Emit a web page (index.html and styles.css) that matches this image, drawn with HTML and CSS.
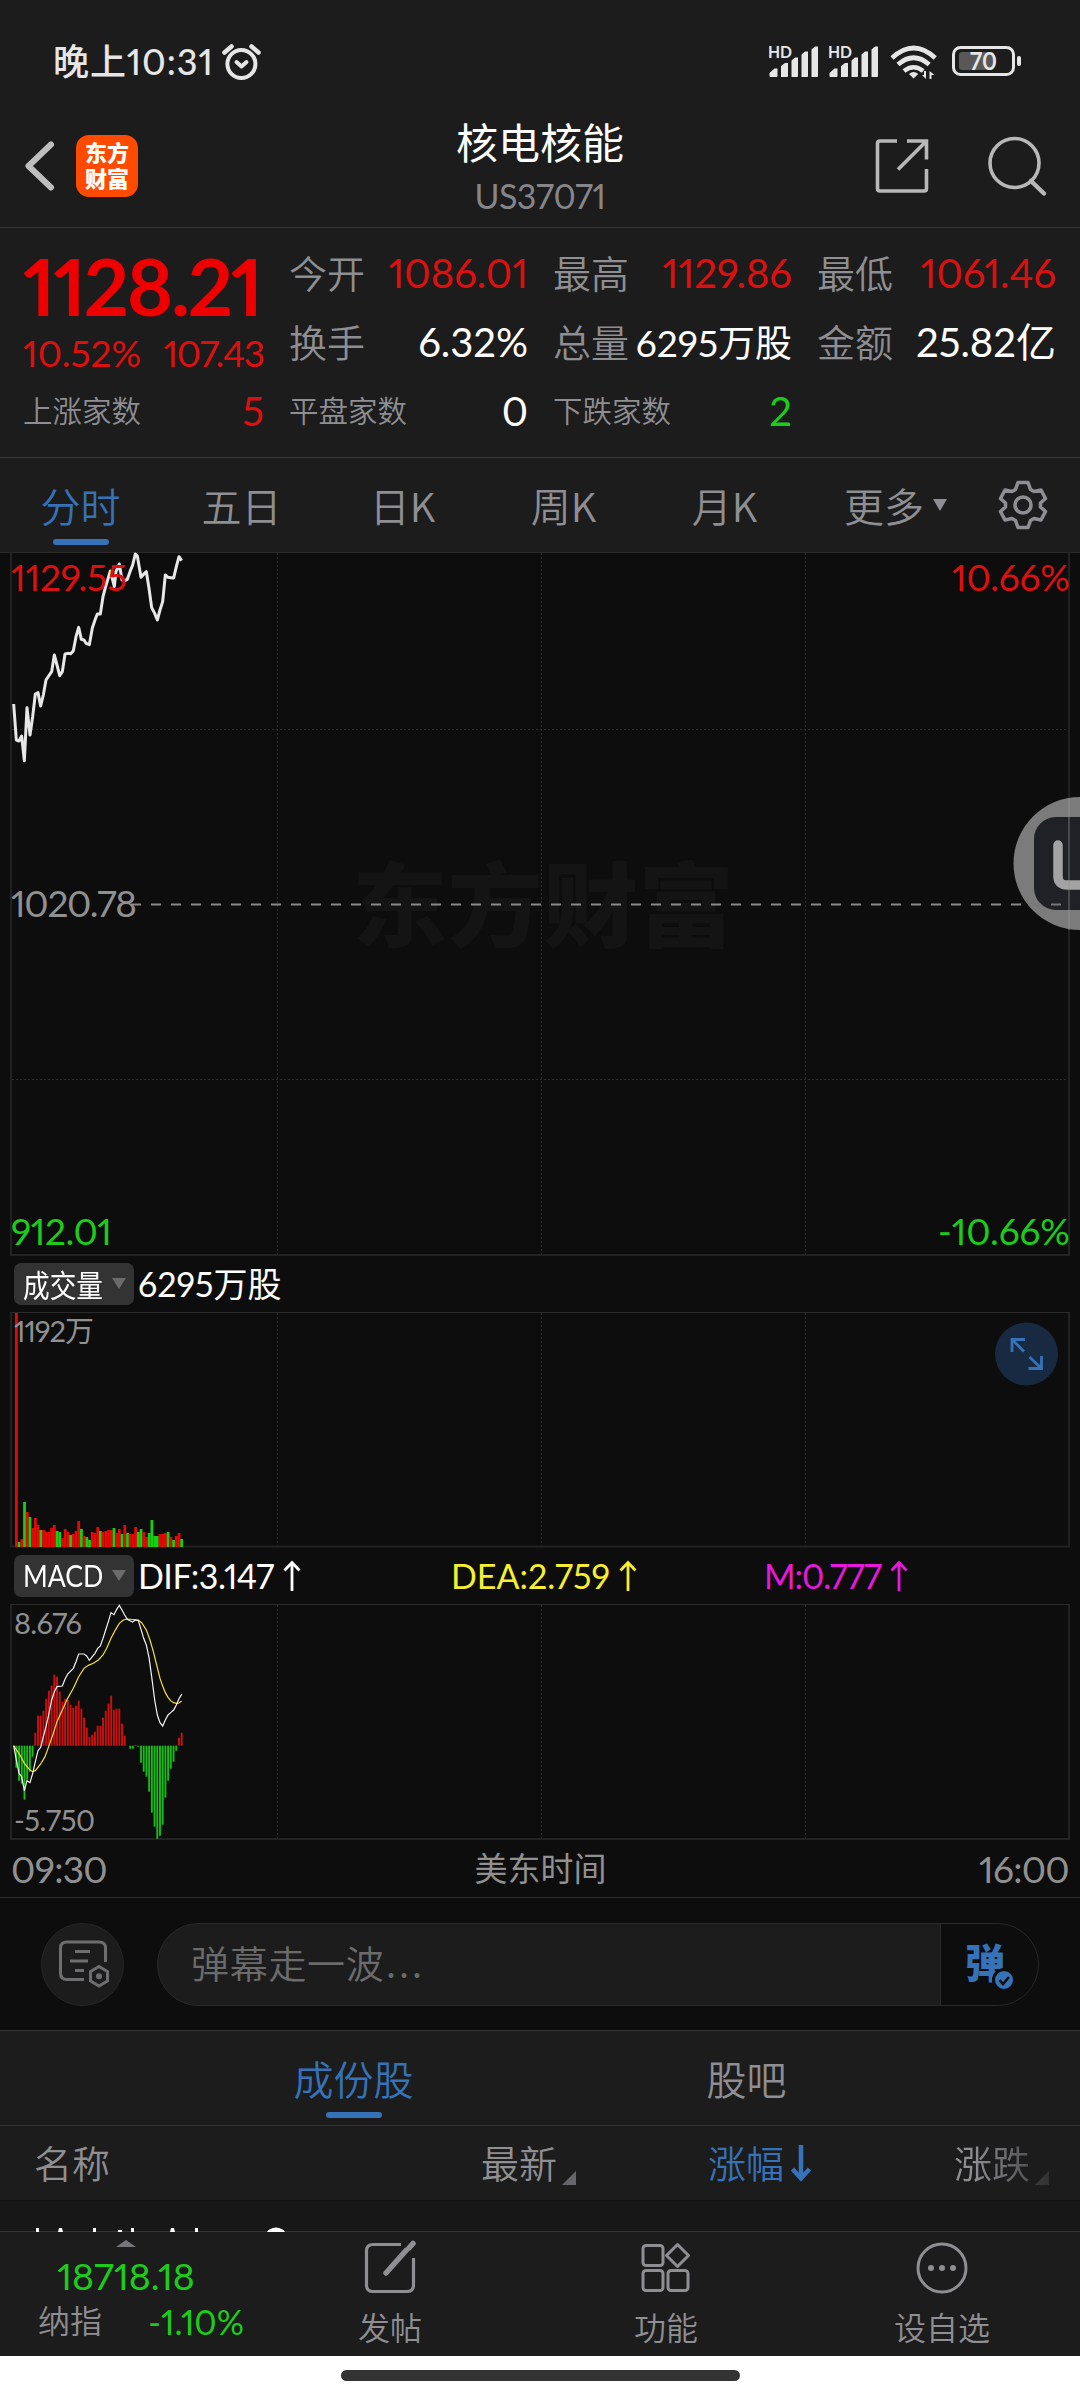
FILE: index.html
```html
<!DOCTYPE html>
<html lang="zh-CN">
<head>
  <meta charset="UTF-8">
  <meta name="viewport" content="width=device-width, initial-scale=1.0">
  <title>核电核能 US37071</title>
  <link rel="stylesheet" href="styles.css">
</head>
<body>
  <div class="status-bar">
    <span class="clock">晚上10:31</span>
    <svg class="alarm" width="42" height="42" viewBox="220 42 42 42" fill="none" stroke="#e6e6e6" stroke-linecap="round">
      <circle cx="241.4" cy="64" r="14" stroke-width="4"/>
      <path d="M224.500 52.500l7-6M258.500 52.500l-7-6" stroke-width="4.500"/>
      <path d="M236.500 62l5 4.500 5-4.500" stroke-width="4" stroke-linejoin="round"/>
    </svg>
    <svg class="signals" width="260" height="42" viewBox="766 42 260 42" fill="#e6e6e6">
      <g id="signal">
        <text x="768" y="57.500" font-size="17" font-weight="700" textLength="24" lengthAdjust="spacingAndGlyphs">HD</text>
        <path d="M770.500 77q-1 0-1-1v-3l5-4.500h3v7.500q0 1-1 1zM781 77v-11l4-3h3v13q0 1-1 1zM791.500 77v-16.500l3.500-3h3v18.500q0 1-1 1zM801.500 77v-22.500l3.500-3h3v24.500q0 1-1 1zM811.500 77v-27.500l3.500-3h3v29.500q0 1-1 1z"/>
      </g>
      <use href="#signal" x="60"/>
      <g fill="none" stroke="#e6e6e6" stroke-width="4.600">
        <path d="M892 58q21.600-20 43.200 0"/>
        <path d="M898 64.500q15.600-13.500 31.200 0"/>
        <path d="M904 71q9.600-7.500 19.200 0"/>
      </g>
      <path d="M909 74q4.600-4 9.200 0l-4.600 4.500zM926 71v8l-4-4h2v-4zM929.500 79v-8l5 4h-3v4z"/>
      <rect x="953.500" y="47.500" width="60" height="27" rx="7" fill="none" stroke="#e6e6e6" stroke-width="3"/>
      <rect x="959" y="52" width="35" height="18" rx="3" fill="#585858"/>
      <rect x="1017" y="56" width="4" height="10" rx="2"/>
      <text x="970" y="70" font-size="24" font-weight="700" textLength="27" lengthAdjust="spacingAndGlyphs">70</text>
    </svg>
  </div>

  <div class="nav-bar">
    <svg class="back" width="34" height="56" viewBox="24 138 34 56" fill="none" stroke="#bebebe" stroke-width="6" stroke-linecap="round" stroke-linejoin="round"><path d="M51 144.500L28.500 166l22.500 21.500"/></svg>
    <div class="logo"><span>东方</span><span>财富</span></div>
    <div class="nav-title">
      <h1>核电核能</h1>
      <p>US37071</p>
    </div>
    <svg class="nav-icons" width="180" height="64" viewBox="870 134 180 64" fill="none" stroke="#b8b8b8" stroke-width="3.600">
      <path d="M897 141h-17q-2.500 0-2.500 2.500v45q0 2.500 2.500 2.500h44q2.500 0 2.500-2.500v-19.500M926.500 159.500v-18.500h-19.500M925 142.500l-27 27"/>
      <circle cx="1014.500" cy="163" r="24.500"/>
      <path d="M1031 181l13 12.500" stroke-linecap="round" stroke-width="4.500"/>
    </svg>
  </div>

  <div class="quote">
    <div class="price">
      <div class="last">1128.21</div>
      <div class="change"><span>10.52%</span><span class="diff">107.43</span></div>
    </div>
    <div class="item"><label>今开</label><b class="red">1086.01</b></div>
    <div class="item"><label>最高</label><b class="red">1129.86</b></div>
    <div class="item"><label>最低</label><b class="red">1061.46</b></div>
    <div class="item"><label>换手</label><b>6.32%</b></div>
    <div class="item"><label>总量</label><b class="amount">6295万股</b></div>
    <div class="item"><label>金额</label><b>25.82亿</b></div>
    <div class="item small"><label>上涨家数</label><b class="red">5</b></div>
    <div class="item small"><label>平盘家数</label><b>0</b></div>
    <div class="item small"><label>下跌家数</label><b class="green">2</b></div>
  </div>

  <div class="period-tabs">
    <span class="tab active">分时</span>
    <span class="tab">五日</span>
    <span class="tab">日K</span>
    <span class="tab">周K</span>
    <span class="tab">月K</span>
    <span class="tab more">更多<i></i></span>
    <svg class="gear" width="50" height="52" viewBox="-25 -26 50 52" fill="none" stroke="#8e8e93" stroke-width="3.600" stroke-linejoin="round">
      <path d="M-5-22.500H5L7.500-15.500 11-13.500 18-15 22.500-6.500 17.500-2V2L22.500 6.500 18 15 11 13.500 7.500 15.500 5 22.500H-5L-7.500 15.500-11 13.500-18 15-22.500 6.500-17.500 2V-2L-22.500-6.500-18-15-11-13.500-7.500-15.500z"/>
      <circle r="8"/>
    </svg>
  </div>

  <svg class="chart" width="1080" height="704" viewBox="0 552 1080 704">
    <text class="watermark" x="352" y="940" textLength="382" lengthAdjust="spacingAndGlyphs">东方财富</text>
    <path class="grid" d="M277.500 553v701M541.500 553v701M805.500 553v701M12 729.500h1057M12 1079.500h1057"/>
    <path class="frame" d="M11 553v702h1058v-702"/>
    <path class="top-line" d="M0 552.500h1080"/>
    <path class="base-line" d="M131 904.500h932"/>
    <polyline class="price-line" transform="translate(0 540) scale(.33333)" points="41,492 49,600 57,603 65,588 73,662 81,503 90,585 98,530 106,462 114,458 122,498 130,465 138,420 146,408 155,395 163,345 171,375 179,407 187,395 195,342 203,340 212,341 220,332 228,290 236,262 244,298 252,300 258,310 268,314 277,264 285,240 292,222 301,222 309,170 317,140 331,93 343,140 348,95 358,72 366,120 374,122 382,118 390,95 398,75 406,42 412,48 423,112 431,103 439,95 447,145 455,203 464,220 472,240 480,210 488,185 496,105 504,112 512,113 521,114 529,80 537,50 545,62"/>
    <text class="red" x="11" y="591" textLength="116">1129.55</text>
    <text class="red" x="952" y="591" textLength="118">10.66%</text>
    <text class="grey" x="11" y="917" textLength="126">1020.78</text>
    <text class="green" x="11" y="1245" textLength="101">912.01</text>
    <text class="green" x="938" y="1245" textLength="132">-10.66%</text>
    <circle cx="1080" cy="863.500" r="66.500" fill="#7b7b7b"/>
    <rect x="1034" y="817" width="80" height="93" rx="22" fill="#202127"/>
    <path d="M1058 845v31q0 9 9 9h20" fill="none" stroke="#a3a3a3" stroke-width="9.500" stroke-linecap="round"/>
    <path d="M1033 904.500h8M1051 904.500h10" stroke="#777" stroke-width="2"/>
    <path d="M1069 798v132" stroke="#999" stroke-opacity=".35" stroke-width="2"/>
  </svg>

  <div class="legend">
    <button type="button"><span>成交量</span><i></i></button>
    <span class="value">6295万股</span>
  </div>

  <svg class="chart" width="1080" height="236" viewBox="0 1312 1080 236">
    <path class="grid" d="M277.500 1313v233M541.500 1313v233M805.500 1313v233"/>
    <path class="frame" d="M11 1312.500v234h1058v-234"/>
    <path class="thin-line" d="M10 1312.500h1060"/>
    <g id="volumeBars"></g>
    <text class="grey small" x="14" y="1342" textLength="80">1192万</text>
    <circle cx="1026.500" cy="1354" r="31.500" fill="#182a41"/>
    <path d="M1012 1352v-12.500h13M1013 1340.500l11 11M1041.500 1356v12.500h-13M1040.500 1367.500l-11-10.500" fill="none" stroke="#3572b8" stroke-width="2.800"/>
  </svg>

  <div class="legend">
    <button type="button"><span>MACD</span><i></i></button>
    <span class="value dif">DIF:3.147<svg class="up" width="18" height="32" viewBox="0 0 18 32"><path d="M9 31V3M1.500 10.500L9 2.500l7.500 8"/></svg></span>
    <span class="value dea">DEA:2.759<svg class="up" width="18" height="32" viewBox="0 0 18 32"><path d="M9 31V3M1.500 10.500L9 2.500l7.500 8"/></svg></span>
    <span class="value macd">M:0.777<svg class="up" width="18" height="32" viewBox="0 0 18 32"><path d="M9 31V3M1.500 10.500L9 2.500l7.500 8"/></svg></span>
  </div>

  <svg class="chart" width="1080" height="236" viewBox="0 1604 1080 236">
    <path class="grid" d="M277.500 1605v233M541.500 1605v233M805.500 1605v233"/>
    <path class="frame" d="M11 1604.500v234.500h1058v-234.500"/>
    <path class="thin-line" d="M10 1604.500h1060"/>
    <g id="macdBars"></g>
    <g class="macd-lines" transform="translate(0 1540) scale(.33333)">
      <polyline stroke="#f0e040" points="41,617 60,645 73,670 90,690 98,695 106,692 122,672 135,650 146,620 160,580 171,545 187,510 203,475 220,445 236,410 252,385 265,376 280,370 295,360 309,345 320,325 333,295 345,272 358,250 370,240 382,237 415,240 425,248 439,270 450,300 460,335 470,375 480,415 488,438 496,458 504,472 512,482 521,488 529,490 537,489 545,483"/>
      <polyline stroke="#f5f5f5" points="41,617 49,660 57,700 65,710 73,752 81,722 90,728 98,700 106,665 114,632 122,622 130,590 138,560 146,525 155,480 163,455 171,440 187,438 195,418 203,402 220,385 228,365 236,342 252,342 260,348 268,361 277,350 285,340 293,325 301,318 309,295 317,270 325,245 333,218 342,224 350,208 358,196 366,210 374,225 382,238 398,246 406,240 415,242 423,268 431,295 439,315 447,352 455,410 464,480 472,525 480,548 488,558 496,540 504,525 512,518 521,510 529,495 537,476 545,463"/>
    </g>
    <text class="grey small" x="14" y="1634" textLength="68">8.676</text>
    <text class="grey small" x="14" y="1831" textLength="81">-5.750</text>
  </svg>

  <div class="time-axis">
    <span>09:30</span>
    <span class="zone">美东时间</span>
    <span>16:00</span>
  </div>

  <div class="danmu">
    <div class="danmu-set">
      <svg width="54" height="52" viewBox="56 1940 54 52" fill="none" stroke="#6e6e70" stroke-width="3">
        <path d="M84 1981.500h-17q-6.500 0-6.500-6.500v-25q0-6 6.500-6h32q6.500 0 6.500 6v14"/>
        <path d="M75 1953.500h15M70 1963h18M75 1972.500h9"/>
        <path d="M99 1968.500l8.500 5v9.500l-8.500 5-8.500-5v-9.500z"/>
        <circle cx="99" cy="1978.300" r="2" fill="#6e6e70" stroke-width="2"/>
      </svg>
    </div>
    <div class="danmu-input">
      <span class="placeholder">弹幕走一波<span class="dots">...</span></span>
      <div class="danmu-toggle">
        <span>弹</span>
        <svg width="24" height="24" viewBox="-12 -12 24 24"><circle r="10.500" fill="#3572b8" stroke="#0d0d0d" stroke-width="3"/><path d="M-4.500 0l3.500 4 6-7" fill="none" stroke="#0d0d0d" stroke-width="2.500"/></svg>
      </div>
    </div>
  </div>

  <div class="list-tabs">
    <span class="tab active">成份股</span>
    <span class="tab">股吧</span>
  </div>

  <div class="list-head">
    <span class="name">名称</span>
    <span class="col">最新<i></i></span>
    <span class="col sorted">涨幅<svg width="22" height="38" viewBox="0 0 22 38"><path d="M11 1v32M2.500 25L11 34.500l8.500-9.500" fill="none" stroke="#3572b8" stroke-width="4.500"/></svg></span>
    <span class="col fade">涨跌<i></i></span>
  </div>

  <!-- first row is scrolled mostly under the bottom bar -->
  <div class="list-row">
    <svg width="290" height="5" viewBox="0 0 290 5" fill="#fff"><path d="M36 1h3v4h-3zM59 1h3l1 4h-5zM93 1h3v4h-3zM118 3h4v2h-4zM131 1h3v4h-3zM171 1h3l1 4h-5zM195 1h3v4h-3zM267 5q2-4 9-4.500 7 .5 9 4.500z"/></svg>
  </div>

  <div class="bottom-bar">
    <div class="index">
      <i></i>
      <div class="index-value">18718.18</div>
      <div class="index-row"><span>纳指</span><b>-1.10%</b></div>
    </div>
    <div class="action">
      <svg width="56" height="56" viewBox="362 2240 56 56" fill="none" stroke="#8e8e93" stroke-width="3.200">
        <path d="M401 2244.500h-28q-6.500 0-6.500 6.500v34q0 6.500 6.500 6.500h34q6.500 0 6.500-6.500v-27"/>
        <path d="M386 2273l20-22.500M409 2248l4-4.500" stroke-width="5.500" stroke-linecap="round"/>
      </svg>
      <span>发帖</span>
    </div>
    <div class="action">
      <svg width="56" height="56" viewBox="639 2240 56 56" fill="none" stroke="#8e8e93" stroke-width="3">
        <rect x="644" y="2245.500" width="20" height="20" rx="3"/>
        <rect x="644" y="2270.500" width="20" height="20" rx="3"/>
        <rect x="669" y="2270.500" width="20" height="20" rx="3"/>
        <path d="M678.500 2244.500l11 11-11 11-11-11z" stroke-linejoin="round"/>
      </svg>
      <span>功能</span>
    </div>
    <div class="action">
      <svg width="56" height="56" viewBox="914 2240 56 56" fill="#8e8e93">
        <circle cx="942" cy="2268" r="24" fill="none" stroke="#8e8e93" stroke-width="3"/>
        <circle cx="931" cy="2268" r="3"/><circle cx="942" cy="2268" r="3"/><circle cx="953" cy="2268" r="3"/>
      </svg>
      <span>设自选</span>
    </div>
  </div>

  <div class="home-area"><div class="home-pill"></div></div>

  <script>
    const STEP = 2.71;
    // one value per minute: positive = red, negative = green
    const volume = [234, -5, 8, -45, 35, -30, 19, 29, 22, -17, 17, 15, 15, 19, 22, -16, -15, 9, 18, 15, -12, 13, 16, 26, -18, 11, -10, -7, 15, 14, 20, -16, 15, 16, 17, 17, -19, 14, 18, -13, 22, -14, 13, 13, 20, -15, -18, 15, 10, -14, -27, -11, -11, 13, 13, 14, -15, 10, -7, 11, 14, -8];
    const macd = [-22, -35, -38, -54, -34, -26, -11, 13, 30, 30, 35, 47, 55, 60, 71, 69, 54, 44, 47, 46, 41, 38, 40, 45, 37, 28, 18, 9, 11, 14, 20, 20, 28, 35, 42, 50, 36, 37, 37, 22, 10, 0, -3, -3, 1, -1, -17, -26, -31, -46, -67, -81, -93, -90, -79, -52, -35, -23, -16, -5, 8, 13];

    function addBar(group, x, y, width, height, color) {
      const rect = document.createElementNS('http://www.w3.org/2000/svg', 'rect');
      rect.setAttribute('x', x.toFixed(2));
      rect.setAttribute('y', y);
      rect.setAttribute('width', width);
      rect.setAttribute('height', height);
      rect.setAttribute('fill', color);
      group.appendChild(rect);
    }

    const volumeBars = document.getElementById('volumeBars');
    volume.forEach((v, i) => {
      const h = Math.abs(v);
      addBar(volumeBars, 15 + i * STEP, 1547 - h, 2.8, h, v > 0 ? '#e60806' : '#13d013');
    });

    const macdBars = document.getElementById('macdBars');
    macd.forEach((v, i) => {
      const h = Math.abs(v);
      addBar(macdBars, 15.4 + i * STEP, v > 0 ? 1745.7 - h : 1745.7, 1.9, h, v > 0 ? '#cc1010' : '#14be14');
    });
  </script>
</body>
</html>
```
FILE: styles.css
```css
* {
  box-sizing: border-box;
}

body {
  margin: 0;
  width: 1080px;
  height: 2400px;
  overflow: hidden;
  background: #0d0d0d;
  color: #fff;
  font-family: Lato, "Noto Sans CJK SC", sans-serif;
  font-variant-numeric: proportional-nums;
  line-height: 1;
  white-space: nowrap;
}

h1,
p {
  margin: 0;
  font-weight: 400;
}

b,
i {
  font-weight: 400;
  font-style: normal;
}

svg {
  display: block;
  flex: none;
}

.red {
  color: #dc1010;
  fill: #dc1010;
}

.green {
  color: #1ccc1c;
  fill: #1ccc1c;
}

/* status bar */
.status-bar {
  display: flex;
  align-items: center;
  height: 80px;
  padding: 46px 54px 0 53px;
  background: #1c1c1c;
  color: #e6e6e6;
}

.status-bar svg {
  margin-top: -1px;
}

.clock {
  width: 167px;
  margin-top: -4px;
  font-size: 36px;
  font-weight: 500;
  letter-spacing: 0.9px;
}

.signals {
  margin-left: auto;
}

/* title bar */
.nav-bar {
  display: flex;
  align-items: center;
  height: 148px;
  padding: 0 30px 0 24px;
  background: #1c1c1c;
  border-bottom: 1px solid #363638;
}

.back {
  margin-top: 25px;
}

.logo {
  display: flex;
  flex-direction: column;
  align-items: center;
  justify-content: center;
  gap: 4px;
  width: 62px;
  height: 62px;
  margin: 25px 0 0 18px;
  border-radius: 13px;
  background: #ff4a00;
  font-size: 22px;
  font-weight: 900;
}

.nav-title {
  flex: 1;
  padding: 24px 0 0 72px;
  text-align: center;
}

.nav-title h1 {
  padding-top: 4px;
  font-size: 42px;
}

.nav-title p {
  margin-top: 15px;
  color: #85858a;
  font-size: 34px;
  letter-spacing: -0.5px;
}

.nav-icons {
  margin-top: 24px;
}

/* quote */
.quote {
  display: grid;
  grid-template-columns: 241px 239px 239px 239px;
  grid-template-rows: 70px 68px 69px;
  column-gap: 25px;
  height: 230px;
  padding: 10px 24px 0 23px;
  background: #1c1c1c;
  border-bottom: 1px solid #363638;
}

.price {
  grid-row: 1 / 3;
}

.last {
  height: 93px;
  padding-top: 8px;
  color: #ee0000;
  font-size: 79px;
  font-weight: 700;
  letter-spacing: -2.2px;
}

.change {
  display: flex;
  justify-content: space-between;
  padding-top: 3px;
  color: #dc1010;
  font-size: 37px;
}

.change .diff {
  letter-spacing: -1.2px;
}

.item {
  display: flex;
  align-items: center;
  justify-content: space-between;
  font-size: 40px;
}

.item label {
  color: #8e8e93;
  font-size: 38px;
  font-weight: 350;
}

.item.small label {
  font-size: 29.5px;
}

.item .amount {
  font-size: 37px;
}

/* period tabs */
.period-tabs {
  display: flex;
  align-items: center;
  height: 94px;
  background: #1c1c1c;
}

.tab {
  display: flex;
  align-items: center;
  justify-content: center;
  position: relative;
  height: 94px;
  color: #8e8e93;
  font-family: "Noto Sans CJK SC", sans-serif;
  font-size: 40px;
  font-weight: 350;
}

.period-tabs .tab {
  width: 161px;
}

.period-tabs .tab.more {
  width: 153px;
  padding-left: 28px;
}

.more i {
  margin-left: 9px;
  border: 7px solid transparent;
  border-top: 12px solid #8e8e93;
  border-bottom: 0;
}

.tab.active {
  color: #3572b8;
}

.tab.active::after {
  content: "";
  position: absolute;
  bottom: 7px;
  left: 50%;
  width: 56px;
  height: 6px;
  margin-left: -28px;
  border-radius: 3px;
  background: #3572b8;
}

.gear {
  margin-left: 40px;
}

/* charts */
.chart text {
  font-size: 37px;
}

.chart .small {
  font-size: 29px;
}

.chart .grey {
  fill: #909090;
}

.chart .watermark {
  fill: #141414;
  font-size: 92px;
  font-weight: 900;
}

.grid {
  fill: none;
  stroke: #2e2e2e;
  stroke-dasharray: 2 2;
}

.frame {
  fill: none;
  stroke: #222;
  stroke-width: 2;
}

.top-line,
.thin-line {
  stroke: #2a2a2a;
}

.base-line {
  stroke: #8a8a8a;
  stroke-width: 2;
  stroke-dasharray: 10 10;
}

.price-line {
  fill: none;
  stroke: #e8e8e8;
  stroke-width: 9;
  stroke-linejoin: round;
}

.macd-lines {
  fill: none;
  stroke-width: 3.6;
}

.legend {
  display: flex;
  align-items: center;
  height: 56px;
  padding-left: 14px;
}

.legend button {
  display: flex;
  align-items: center;
  justify-content: space-between;
  width: 120px;
  height: 42px;
  margin: 0 4px 0 0;
  padding: 0 8px 2px 9px;
  border: 0;
  border-radius: 7px;
  background: #333;
  color: #fff;
  font-family: inherit;
  font-size: 31px;
}

.legend button span {
  width: 80px;
  transform: scaleX(0.86);
  transform-origin: left;
  text-align: left;
}

.legend button i {
  border: 7px solid transparent;
  border-top: 11px solid #6b6b6b;
  border-bottom: 0;
}

.value {
  display: flex;
  align-items: center;
  width: 313px;
  font-size: 34px;
}

.up {
  margin-left: 9px;
  fill: none;
  stroke: currentColor;
  stroke-width: 2.8;
}

.dif {
  letter-spacing: -0.5px;
}

.dea {
  color: #f7ee30;
}

.macd {
  color: #e818dc;
  letter-spacing: -1px;
}

.time-axis {
  display: flex;
  align-items: center;
  justify-content: space-between;
  height: 58px;
  padding: 0 11px;
  border-bottom: 1px solid #2e2e30;
  color: #909090;
  font-size: 37px;
  letter-spacing: -0.7px;
}

.time-axis .zone {
  margin-right: 5px;
  font-size: 33px;
  letter-spacing: 0;
}

/* danmu */
.danmu {
  display: flex;
  align-items: center;
  height: 133px;
  padding: 0 41px;
  border-bottom: 1px solid #363638;
}

.danmu-set {
  display: flex;
  align-items: center;
  justify-content: center;
  width: 83px;
  height: 83px;
  border: 1px solid #262626;
  border-radius: 50%;
  background: #1c1c1c;
}

.danmu-input {
  display: flex;
  justify-content: space-between;
  width: 882px;
  height: 83px;
  margin-left: 33px;
  overflow: hidden;
  border: 1px solid #2a2a2a;
  border-radius: 42px;
  background: #1c1c1c;
}

.placeholder {
  padding: 20px 0 0 33px;
  color: #6b6b6b;
  font-size: 38px;
  font-weight: 350;
  letter-spacing: 0.7px;
}

.dots {
  margin-left: 2px;
  font-weight: 400;
  letter-spacing: 4px;
}

.danmu-toggle {
  display: flex;
  width: 98px;
  padding: 19px 0 0 24px;
  border-left: 1px solid #2a2a2a;
  background: #0d0d0d;
  color: #3572b8;
  font-size: 40px;
  font-weight: 900;
}

.danmu-toggle svg {
  margin: 25px 0 0 -13px;
}

/* component stock list */
.list-tabs {
  display: flex;
  justify-content: center;
  height: 95px;
  padding-left: 20px;
  background: #1c1c1c;
  border-bottom: 1px solid #363638;
}

.list-tabs .tab {
  width: 393px;
}

.list-head {
  display: grid;
  grid-template-columns: 447px 227px 246px 126px;
  align-items: center;
  height: 74px;
  padding-left: 34px;
  background: #1c1c1c;
  color: #8e8e93;
  font-size: 38px;
  font-weight: 350;
}

.col {
  display: flex;
  align-items: center;
}

.col i {
  margin: 30px 0 0 5px;
  border-left: 14px solid transparent;
  border-bottom: 14px solid #66666a;
}

.col svg {
  margin-left: 6px;
}

.col.sorted {
  color: #3572b8;
}

.col.fade {
  height: 74px;
  -webkit-mask-image: linear-gradient(to right, #000 20px, rgba(0, 0, 0, 0.25) 100px);
  mask-image: linear-gradient(to right, #000 20px, rgba(0, 0, 0, 0.25) 100px);
}

.list-row {
  height: 31px;
  padding-top: 26px;
  border-top: 1px solid #121212;
  background: #171717;
}

/* bottom bar */
.bottom-bar {
  display: flex;
  height: 125px;
  background: #1c1c1c;
  border-top: 1px solid #363638;
}

.index {
  width: 252px;
  padding-top: 8px;
}

.index i {
  display: block;
  width: 0;
  margin: 0 auto;
  border: 10px solid transparent;
  border-bottom: 7px solid #77777b;
  border-top: 0;
}

.index-value {
  margin-top: 10px;
  color: #1ccc1c;
  font-size: 37.5px;
  text-align: center;
}

.index-row {
  display: flex;
  align-items: center;
  justify-content: space-between;
  margin-top: 9px;
  padding: 0 8px 0 38px;
  color: #8e8e93;
  font-size: 32px;
  font-weight: 350;
}

.index-row b {
  padding-top: 1px;
  color: #1ccc1c;
  font-size: 34px;
}

.action {
  display: flex;
  flex-direction: column;
  align-items: center;
  width: 276px;
  padding-top: 8px;
  color: #8e8e93;
  font-size: 32px;
  font-weight: 350;
}

.action span {
  margin-top: 16px;
}

.home-area {
  height: 44px;
  padding-top: 14px;
  background: #fff;
}

.home-pill {
  width: 399px;
  height: 11px;
  margin: 0 auto;
  border-radius: 6px;
  background: #333;
}
```
